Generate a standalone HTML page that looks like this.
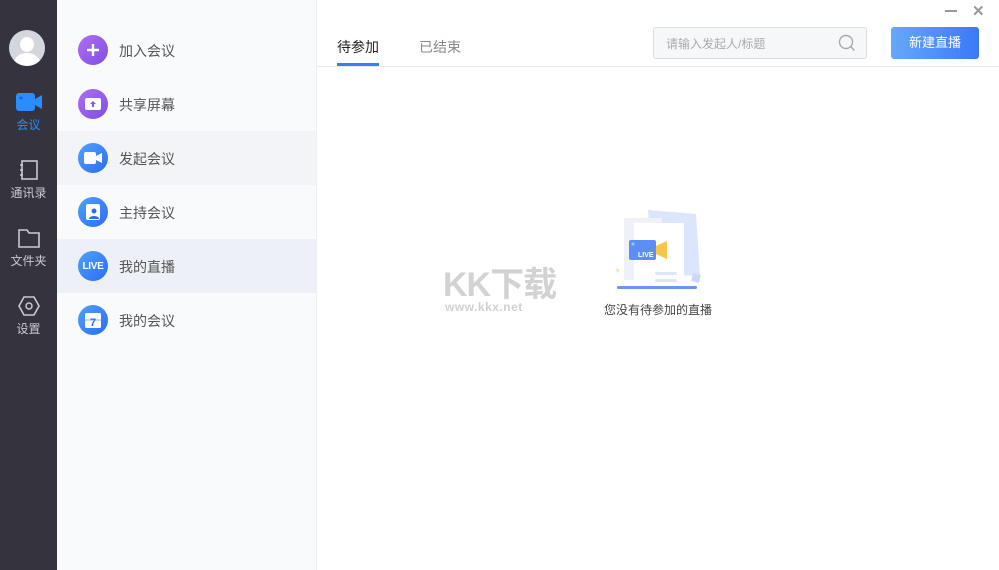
<!DOCTYPE html>
<html><head><meta charset="utf-8"><style>
*{margin:0;padding:0;box-sizing:border-box}
body{width:999px;height:570px;overflow:hidden;background:#fff;font-family:"Liberation Sans","Noto Sans CJK SC",sans-serif;position:relative}
.side{position:absolute;left:0;top:0;width:57px;height:570px;background:#35343e}
.nav{position:absolute;left:0;width:57px;text-align:center;font-size:12px;color:#c9c9cf}
.panel{position:absolute;left:57px;top:0;width:260px;height:570px;background:#f9fafc;border-right:1px solid #efeff2}
.row{position:absolute;left:0;width:259px;height:54px}
.row .ic{position:absolute;left:21px;top:12px;width:30px;height:30px;border-radius:50%;display:flex;align-items:center;justify-content:center}
.row span{position:absolute;left:62px;top:18px;font-size:14px;color:#555}
.pur{background:linear-gradient(135deg,#b06ef0,#7d4ee6)}
.blu{background:linear-gradient(135deg,#4da2ff,#2d6bf3)}
</style></head><body>
<div class="side">
 <div style="position:absolute;left:9px;top:30px;width:36px;height:36px;border-radius:50%;background:#d4d6de;overflow:hidden">
  <div style="position:absolute;left:11px;top:7px;width:14px;height:15px;border-radius:50%;background:#fff"></div>
  <div style="position:absolute;left:5px;top:23px;width:26px;height:20px;border-radius:50%;background:#fff"></div>
 </div>
 <div class="nav" style="top:93px"><svg width="28" height="18" viewBox="0 0 28 18"><rect x="1" y="0" width="19" height="18" rx="3" fill="#2b8cff"/><path d="M20 6 L27 2 V16 L20 12Z" fill="#2b8cff"/><circle cx="6" cy="5" r="1.5" fill="#1660d0"/></svg><div style="color:#2b8cff;margin-top:2px">会议</div></div>
 <div class="nav" style="top:160px"><svg width="22" height="20" viewBox="0 0 22 20"><rect x="4" y="1" width="15" height="18" fill="none" stroke="#c9c9cf" stroke-width="1.6"/><path d="M2 5h3M2 10h3M2 15h3" stroke="#c9c9cf" stroke-width="1.4"/></svg><div style="margin-top:1px">通讯录</div></div>
 <div class="nav" style="top:228px"><svg width="24" height="20" viewBox="0 0 24 20"><path d="M2 2h8l2 3h10v14H2Z" fill="none" stroke="#c9c9cf" stroke-width="1.6"/></svg><div style="margin-top:1px">文件夹</div></div>
 <div class="nav" style="top:296px"><svg width="22" height="20" viewBox="0 0 22 20"><path d="M6 1h10l5 9-5 9H6l-5-9Z" fill="none" stroke="#c9c9cf" stroke-width="1.6"/><circle cx="11" cy="10" r="3" fill="none" stroke="#c9c9cf" stroke-width="1.5"/></svg><div style="margin-top:1px">设置</div></div>
</div>
<div class="panel">
 <div class="row" style="top:23px"><div class="ic pur"><svg width="14" height="14"><path d="M7 1v12M1 7h12" stroke="#fff" stroke-width="2.4"/></svg></div><span>加入会议</span></div>
 <div class="row" style="top:77px"><div class="ic pur"><svg width="16" height="12"><rect x="0" y="0" width="16" height="12" rx="2" fill="#fff"/><path d="M8 3l-3 3h2v3h2V6h2Z" fill="#8a55e8"/></svg></div><span>共享屏幕</span></div>
 <div class="row" style="top:131px;background:#f3f4f7"><div class="ic blu"><svg width="18" height="12"><rect x="0" y="0" width="12" height="12" rx="2" fill="#fff"/><path d="M12 4l6-3v10l-6-3Z" fill="#fff"/></svg></div><span>发起会议</span></div>
 <div class="row" style="top:185px"><div class="ic blu"><svg width="14" height="16"><rect x="0" y="0" width="14" height="16" rx="2" fill="#fff"/><circle cx="8" cy="7" r="2.5" fill="#2d6bf3"/><path d="M3 15c0-4 10-4 10 0Z" fill="#2d6bf3"/></svg></div><span>主持会议</span></div>
 <div class="row" style="top:239px;background:#edf0f6"><div class="ic blu" style="font:bold 10px 'Liberation Sans';color:#fff;letter-spacing:-.3px">LIVE</div><span>我的直播</span></div>
 <div class="row" style="top:293px"><div class="ic blu"><svg width="16" height="15"><rect x="0" y="0" width="16" height="15" rx="1.5" fill="#fff"/><path d="M0 7h16" stroke="#8fb6ff"/><text x="8" y="13" text-anchor="middle" font-size="11" font-weight="bold" font-family="Liberation Sans" fill="#2d6bf3">7</text></svg></div><span>我的会议</span></div>
</div>
<div style="position:absolute;left:945px;top:10px;width:12px;height:2px;background:#999"></div>
<div style="position:absolute;left:972px;top:2px;font-size:15px;color:#999;font-weight:bold">✕</div>
<div style="position:absolute;left:337px;top:37px;font-size:14px;color:#222">待参加</div>
<div style="position:absolute;left:337px;top:63px;width:42px;height:3px;background:#3b7bf6"></div>
<div style="position:absolute;left:419px;top:37px;font-size:14px;color:#888">已结束</div>
<div style="position:absolute;left:317px;top:66px;width:682px;height:1px;background:#e8e8ec"></div>
<div style="position:absolute;left:653px;top:27px;width:214px;height:32px;border:1px solid #dcdde2;border-radius:3px;background:#f6f7f9"><span style="position:absolute;left:12px;top:7px;font-size:12px;color:#aaa">请输入发起人/标题</span><svg style="position:absolute;left:184px;top:6px" width="18" height="18"><circle cx="8" cy="8" r="6.5" fill="none" stroke="#aaa" stroke-width="1.4"/><path d="M12.5 12.5l4 4" stroke="#aaa" stroke-width="1.5"/></svg></div>
<div style="position:absolute;left:891px;top:27px;width:88px;height:32px;border-radius:3px;background:linear-gradient(90deg,#66a8fb,#3a79f6);color:#fff;font-size:13px;text-align:center;line-height:32px">新建直播</div>
<div style="position:absolute;left:443px;top:257px;font-size:34px;color:#d2d2d2;font-weight:bold;letter-spacing:-1px">KK下载</div>
<div style="position:absolute;left:445px;top:300px;font-size:12px;color:#d0d0d0;font-weight:bold;letter-spacing:.5px">www.kkx.net</div>
<svg style="position:absolute;left:612px;top:208px" width="92" height="86" viewBox="0 0 92 86">
 <path d="M36 2 L84 6 L88 68 L40 66Z" fill="#dbe6fd"/>
 <rect x="12" y="10" width="38" height="62" fill="#eef1f7"/>
 <rect x="22" y="15" width="50" height="60" fill="#fff"/>
 <rect x="17" y="32" width="27" height="20" rx="2" fill="#5b8ff5"/>
 <path d="M44 38 L55 33 V51 L44 46Z" fill="#f7c44c"/>
 <circle cx="21" cy="36" r="1.5" fill="#a9c4fb"/>
 <text x="26" y="49" font-size="7" font-weight="bold" font-family="Liberation Sans" fill="#fff">LIVE</text>
 <rect x="43" y="64" width="22" height="3" rx="1.5" fill="#dbe6fd"/>
 <rect x="43" y="71" width="22" height="3" rx="1.5" fill="#dbe6fd"/>
 <rect x="80" y="66" width="8" height="8" fill="#c8d8fb" transform="rotate(15 84 70)"/>
 <path d="M4 60 l4 2 -3 3Z" fill="#fbe3a6"/>
 <rect x="5" y="78" width="80" height="3" rx="1.5" fill="#6b97f3"/>
</svg>
<div style="position:absolute;left:604px;top:301px;font-size:12px;color:#444">您没有待参加的直播</div>
</body></html>
